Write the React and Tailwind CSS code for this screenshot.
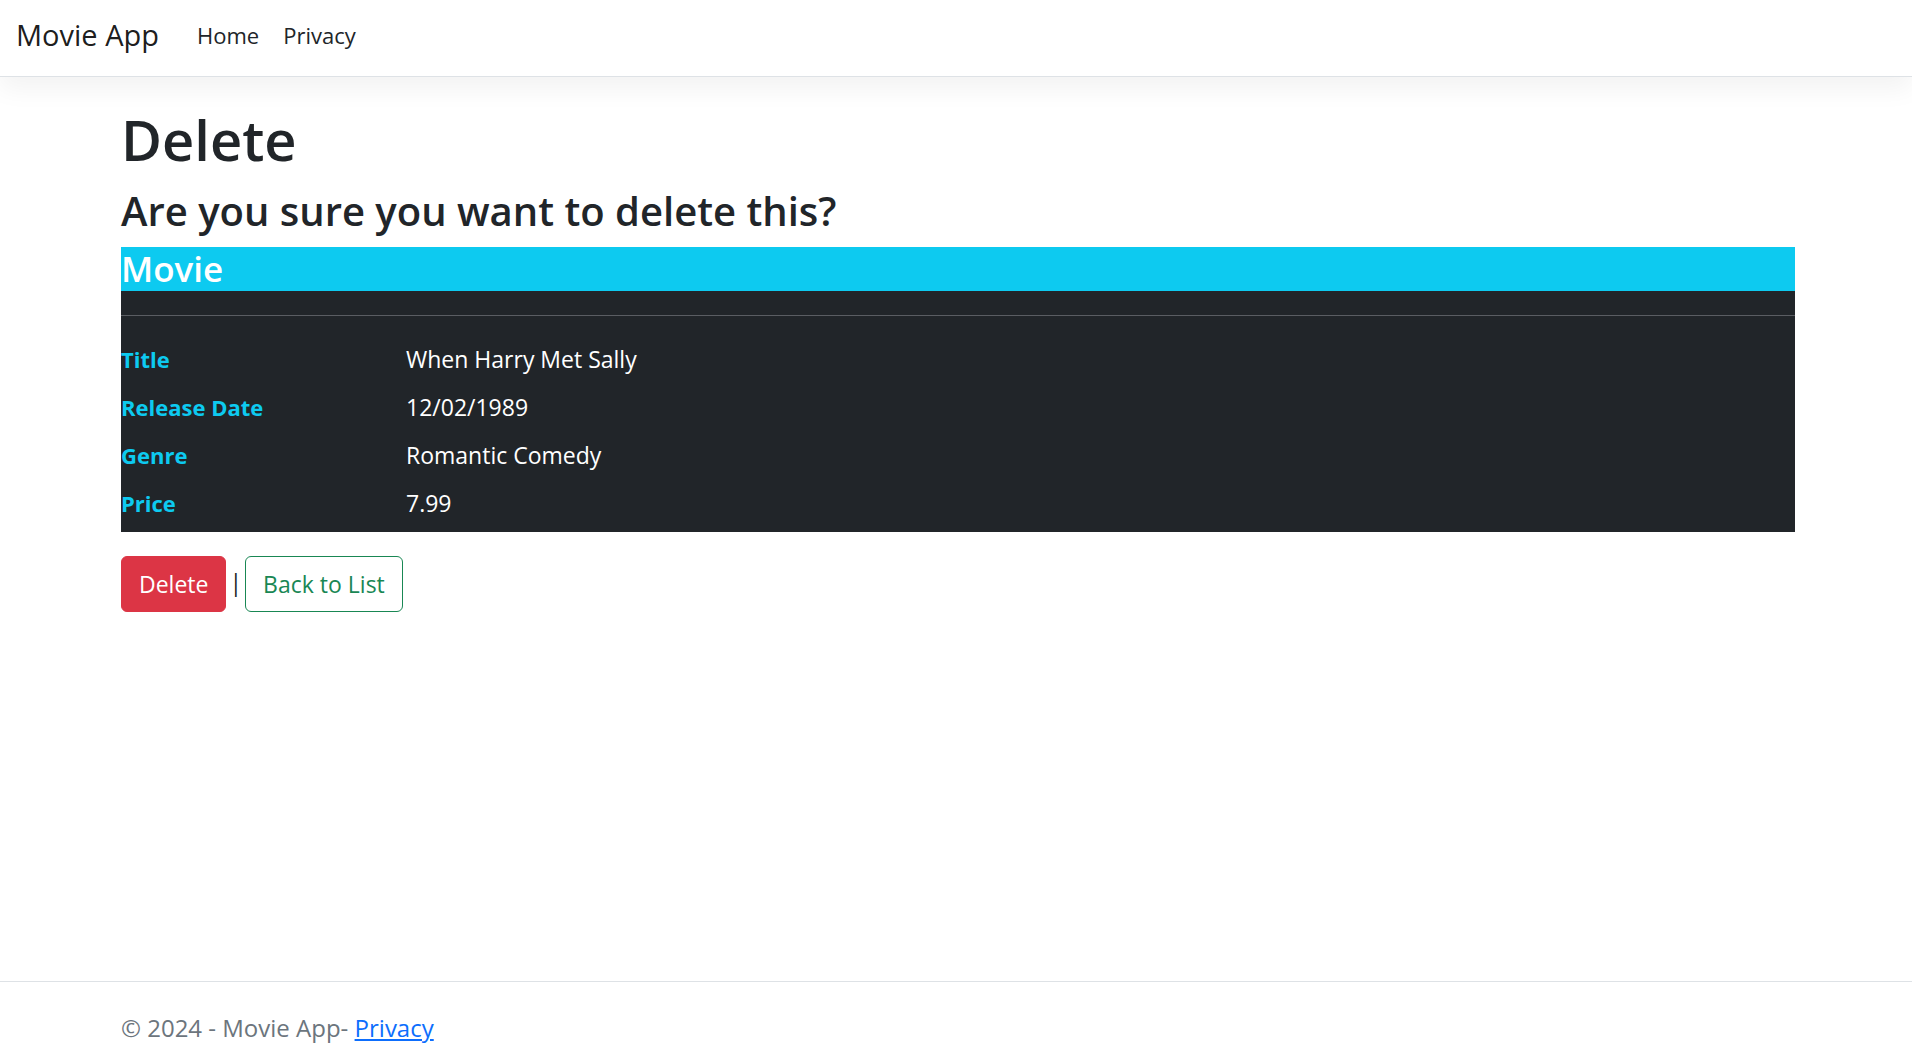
const movie = [
  { label: 'Title', value: 'When Harry Met Sally' },
  { label: 'Release Date', value: '12/02/1989' },
  { label: 'Genre', value: 'Romantic Comedy' },
  { label: 'Price', value: '7.99' },
];

function Header() {
  return (
    <header className="mb-6 border-b border-[#dee2e6] bg-white shadow-[0_12px_24px_rgba(0,0,0,0.05)]">
      <nav className="flex h-[76px] items-center gap-[38px] px-4 pb-1.5">
        <a href="#" className="text-[29px] leading-10 text-black/90">
          Movie App
        </a>
        <div className="flex gap-6 text-[22px] leading-9">
          <a href="#home">Home</a>
          <a href="#privacy">Privacy</a>
        </div>
      </nav>
    </header>
  );
}

function MovieDetails() {
  return (
    <section className="bg-[#212529] text-white">
      <h4 className="bg-[#0dcaf0] text-[35px] leading-[44px] font-semibold">Movie</h4>
      <hr className="my-6 border-t border-[#5a5d62]" />
      <dl className="-mx-[18px] grid grid-cols-[1fr_5fr] gap-y-3 pt-px pb-[11px] leading-9">
        {movie.map(({ label, value }) => (
          <div key={label} className="contents">
            <dt className="px-[18px] text-[22px] font-bold text-[#0dcaf0]">{label}</dt>
            <dd className="px-[18px]">{value}</dd>
          </div>
        ))}
      </dl>
    </section>
  );
}

export default function App() {
  return (
    <div className="flex min-h-screen flex-col bg-white font-['Open_Sans','Noto_Sans',sans-serif] text-[23px] text-[#212529]">
      <Header />
      <div className="grow pl-1">
        <main className="mx-auto w-full max-w-[1710px] px-[18px]">
          <h1 className="mb-2 text-[56px] leading-[76px] font-semibold">Delete</h1>
          <h3 className="mb-2.5 text-[40px] leading-[52px] font-semibold">
            Are you sure you want to delete this?
          </h3>
          <MovieDetails />
          <form className="mt-6 flex items-center gap-[3px]" onSubmit={(e) => e.preventDefault()}>
            <button
              type="submit"
              className="rounded-md border border-[#dc3545] bg-[#dc3545] px-[17px] py-[9px] leading-9 text-white"
            >
              Delete
            </button>
            <span className="pb-1">|</span>
            <a
              href="#list"
              className="rounded-md border border-[#198754] px-[17px] py-[9px] leading-9 text-[#198754]"
            >
              Back to List
            </a>
          </form>
        </main>
      </div>
      <footer className="border-t border-[#dee2e6] pl-1 text-2xl text-[#6c757d]">
        <div className="mx-auto flex h-[72px] w-full max-w-[1710px] items-end px-[18px] pb-2 leading-9">
          <p>
            © 2024 - Movie App-{' '}
            <a href="#privacy" className="text-[#0d6efd] underline">
              Privacy
            </a>
          </p>
        </div>
      </footer>
    </div>
  );
}
